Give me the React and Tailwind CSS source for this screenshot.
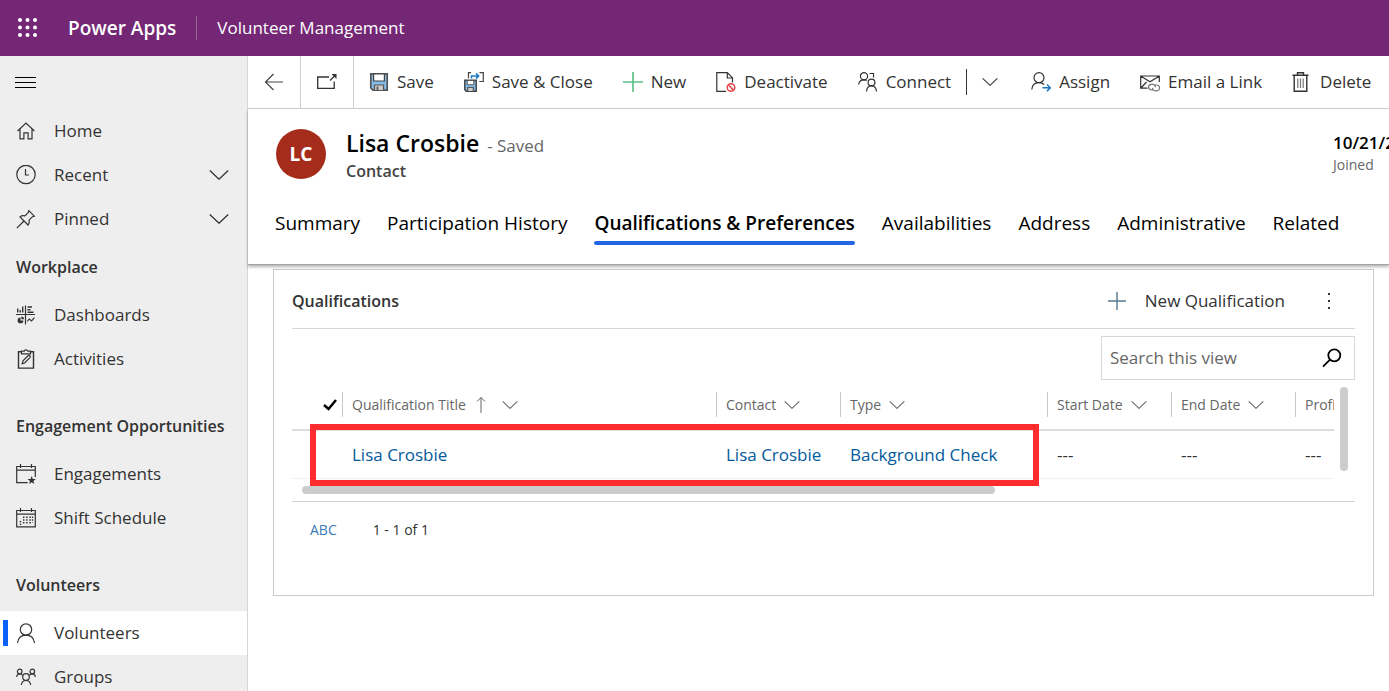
import React from "react";

function Icon({ size = "size-5", children }) {
  return (
    <svg viewBox="0 0 20 20" className={`${size} shrink-0`} fill="none" stroke="#333333" strokeWidth="1.2" aria-hidden="true">
      {children}
    </svg>
  );
}

function Chevron({ className }) {
  return (
    <svg viewBox="0 0 20 10" className={className} fill="none" stroke="currentColor" strokeWidth="1.3" aria-hidden="true">
      <path d="M0.8 0.5 10 9.2 19.2 0.5" />
    </svg>
  );
}

const icons = {
  home: (
    <Icon>
      <path d="M1.6 10 10 2.1 18.4 10M4 8v9.900h3.900v-6h4.200v6H16V8" />
    </Icon>
  ),
  recent: (
    <Icon>
      <circle cx="10" cy="9.500" r="9.200" />
      <path d="M9.500 4v6H13" />
    </Icon>
  ),
  pinned: (
    <Icon>
      <path d="M12.800 1.700 18.300 7.200l-1.800.5-3.400 3.400c.5 1.900.1 3.600-1 4.900L4 7.900c1.300-1.200 3.100-1.500 5-1L12.300 3.500ZM8 12 .8 19.200" />
    </Icon>
  ),
  dashboards: (
    <Icon>
      <path d="M9.500.5v19M0 9.500h19" />
      <path d="M1.700 3.500v4M4.200 5v2.500M6.700 1.500v6M11.500 2h4.500M11.500 4.700h3M11.500 7.300h6" strokeWidth="1.400" />
      <path d="M4.500 12.500a2.900 2.900 0 1 0 2.900 2.900H4.500Z" fill="#333333" stroke="none" />
      <path d="M5.400 11.500a2.900 2.900 0 0 1 2.700 2.800H5.400Z" fill="#333333" stroke="none" />
      <path d="m11.300 16.500 2-2.500 2.300 2 2.800-3.400" />
    </Icon>
  ),
  activities: (
    <Icon>
      <path d="M5.500 2.700h-3v16.400h15V2.700h-3" strokeWidth="1.400" />
      <path d="M5.500 4.800V2.200h2.700a1.900 1.900 0 0 1 3.600 0h2.700v2.600Z" />
      <path d="m6.200 14.800.8-3 5.300-5.300c.9-.8 2.600.8 1.800 1.800L8.900 13.700Z" />
    </Icon>
  ),
  engagements: (
    <Icon>
      <path d="M19.300 13V2.500H.7v16.100h11M.7 6.200h18.600M4.500 0v4M15.500 0v4" />
      <path d="m15.700 12 1.100 2.900 3.100.1-2.500 1.900.9 3-2.600-1.700-2.600 1.700.9-3-2.500-1.900 3.100-.1Z" fill="#333333" stroke="none" />
    </Icon>
  ),
  schedule: (
    <Icon>
      <path d="M.7 2.500h18.600v16.300H.7ZM.7 6.200h18.600M4.500 0v4M15.500 0v4" />
      <path d="M4.500 13v4M7.700 8.500V17M10.900 8.500V17M14.100 8.500V17" strokeDasharray="1.500 1.300" strokeWidth="1.500" />
      <path d="M16.500 8.500v6" strokeDasharray="1.500 1.300" strokeWidth="1.200" />
    </Icon>
  ),
  person: (
    <Icon>
      <circle cx="10" cy="6.500" r="5.700" />
      <path d="M1.500 20c.7-4.700 3.800-7.800 8.500-7.800s7.800 3.100 8.500 7.800" />
    </Icon>
  ),
  groups: (
    <Icon>
      <circle cx="10" cy="10" r="3.300" />
      <circle cx="3.700" cy="4.500" r="2.300" />
      <circle cx="16.300" cy="4.500" r="2.300" />
      <path d="M5.300 18c.4-2.800 2-4.500 4.700-4.500s4.300 1.700 4.700 4.500M.6 9.800c.3-2 1.200-3 3-3 1.400 0 2.400.6 3 1.800M19.400 9.800c-.3-2-1.200-3-3-3-1.400 0-2.400.6-3 1.800" />
    </Icon>
  ),
  save: (
    <Icon>
      <path d="M1.800 1.800h16.400v16.400H4L1.800 16Z" fill="#85bbe8" stroke="#555555" strokeWidth="1.700" />
      <path d="M4.600 2h10.800v7H4.600Z" fill="#ffffff" stroke="#444444" />
      <path d="M5.500 18v-5h9v5" fill="#d2cdc9" stroke="#555555" />
      <path d="M8.500 14.500V18" stroke="#555555" strokeWidth="1.700" />
    </Icon>
  ),
  saveClose: (
    <Icon>
      <path d="M.8 8.300h11.400v11H2.300L.8 17.800Z" fill="#85bbe8" stroke="#444444" strokeWidth="1.500" />
      <path d="M3.200 8.500h6.600v4.300H3.200Z" fill="#ffffff" stroke="#555555" strokeWidth="1" />
      <path d="M3.700 19v-3.500h5.600V19" fill="#d2cdc9" stroke="#555555" />
      <path d="M7 .7H4.500v5.500M15.500.7h3.800v8.800h-4" stroke="#444444" />
      <path d="M7.500 6.500V3.900h7M12 1.200l2.700 2.700L12 6.600" stroke="#1f78c4" strokeWidth="1.500" />
    </Icon>
  ),
  add: (
    <Icon>
      <path d="M10 0v20M0 10h20" stroke="#5fc088" strokeWidth="1.700" />
    </Icon>
  ),
  deactivate: (
    <Icon>
      <path d="M10 19.300H.8V.7h10.500l5.200 5.200v4.500M11.300.8v5.200h5.200" />
      <circle cx="15" cy="15.500" r="3.800" stroke="#e8484c" strokeWidth="1.500" />
      <path d="m12.400 13 5.200 5.100" stroke="#e8484c" strokeWidth="1.500" />
    </Icon>
  ),
  connect: (
    <Icon>
      <circle cx="6" cy="4.300" r="3.600" />
      <path d="M.7 12.500C1 9.500 3 7.900 6 7.900c1 0 1.900.2 2.700.7M11.500 1.500h4v4" />
      <circle cx="13.500" cy="10.500" r="3.400" />
      <path d="M8.500 19.500c.3-3.400 2-5.600 5-5.600s4.700 2.200 5 5.600" />
    </Icon>
  ),
  assign: (
    <Icon>
      <circle cx="8" cy="5.700" r="5" />
      <path d="M.8 17.500c.4-4.500 3-6.800 7.200-6.800 2.200 0 4 .7 5.200 2" />
      <path d="M11.500 15.800h7.500M16 12.500l3.300 3.300L16 19.100" stroke="#1f78c4" strokeWidth="1.500" />
    </Icon>
  ),
  email: (
    <Icon>
      <path d="M7.500 16.200H.7V4h18.600v6M1 4.200l9 5.500 9-5.500M1 16l5.500-6" />
      <path d="M13.500 17.800h-2.200a2.700 2.700 0 0 1 0-5.400h1.500a2.700 2.700 0 0 1 2.600 2.800M14.500 13h2.200a2.900 2.900 0 0 1 0 5.800h-1.500a2.700 2.700 0 0 1-2.700-2.900" stroke="#777777" />
    </Icon>
  ),
  trash: (
    <Icon>
      <path d="M.5 3.200h16M5.500 3V.8h6V3" strokeWidth="1.400" />
      <path d="M2.200 3.500v15.800h12.600V3.500" strokeWidth="1.400" />
      <path d="M5.800 6.500v9.500M8.500 6.500v9.500M11.200 6.500v9.500" stroke="#777777" />
    </Icon>
  ),
};

function NavHeading({ children }) {
  return <h2 className="flex h-[52px] items-center pl-4 text-[16px] font-semibold whitespace-nowrap">{children}</h2>;
}

function NavItem({ icon, label, expandable, active }) {
  return (
    <a
      href="#"
      aria-current={active ? "page" : undefined}
      className={active ? "relative flex h-11 items-center bg-white pr-[18px] pl-4" : "flex h-11 items-center pr-[18px] pl-4"}
    >
      {active && <span className="absolute left-[3px] h-[26px] w-[5px] bg-[#0b62fb]" />}
      {icons[icon]}
      <span className="ml-[18px] flex-1">{label}</span>
      {expandable && <Chevron className="h-2.5 w-5" />}
    </a>
  );
}

function Sidebar() {
  return (
    <nav className="w-[248px] shrink-0 border-r border-[#d6d6d6] bg-[#eeeeee] text-[17px] text-[#333333]">
      <button aria-label="Toggle navigation" className="flex h-[53px] items-center pl-[15px]">
        <svg viewBox="0 0 21 12" className="h-3 w-[21px]" stroke="#000000" strokeWidth="1" aria-hidden="true">
          <path d="M0 .5h21M0 5.500h21M0 10.500h21" />
        </svg>
      </button>
      <NavItem icon="home" label="Home" />
      <NavItem icon="recent" label="Recent" expandable />
      <NavItem icon="pinned" label="Pinned" expandable />
      <NavHeading>Workplace</NavHeading>
      <NavItem icon="dashboards" label="Dashboards" />
      <NavItem icon="activities" label="Activities" />
      <div className="pt-[19px]">
        <NavHeading>Engagement Opportunities</NavHeading>
        <NavItem icon="engagements" label="Engagements" />
        <NavItem icon="schedule" label="Shift Schedule" />
      </div>
      <div className="pt-[19px]">
        <NavHeading>Volunteers</NavHeading>
        <NavItem icon="person" label="Volunteers" active />
        <NavItem icon="groups" label="Groups" />
      </div>
    </nav>
  );
}

function Command({ icon, label }) {
  return (
    <button className="flex shrink-0 items-center gap-2">
      {icons[icon]}
      <span>{label}</span>
    </button>
  );
}

function CommandBar() {
  return (
    <div className="flex h-[53px] items-stretch overflow-hidden border-b border-[#d2d0ce] text-[17px] whitespace-nowrap text-[#333333]">
      <button aria-label="Back" className="flex w-[53px] shrink-0 items-center justify-center border-r border-[#d2d0ce]">
        <svg viewBox="0 0 20 20" className="size-5" fill="none" stroke="#444444" strokeWidth="1.2" aria-hidden="true">
          <path d="M9.500 2 1.500 10l8 8M1.500 10H19" />
        </svg>
      </button>
      <button aria-label="Open in new window" className="flex w-[53px] shrink-0 items-center justify-center border-r border-[#d2d0ce]">
        <svg viewBox="0 0 20 20" className="size-5" fill="none" stroke="#333333" strokeWidth="1.3" aria-hidden="true">
          <path d="M12 5H.7v11.300h16.500V9.500M13 8.500l6-6" />
          <path d="M14.500 2h5v5Z" fill="#333333" stroke="none" />
        </svg>
      </button>
      <div className="flex items-center gap-[30px] pl-[15px]">
        <Command icon="save" label="Save" />
        <Command icon="saveClose" label="Save & Close" />
        <Command icon="add" label="New" />
        <Command icon="deactivate" label="Deactivate" />
        <div className="flex items-center">
          <Command icon="connect" label="Connect" />
          <button aria-label="More connect options" className="ml-[15px] flex h-[26px] items-center border-l border-[#333333] pr-[3px] pl-[15px]">
            <Chevron className="h-2 w-4" />
          </button>
        </div>
        <Command icon="assign" label="Assign" />
        <Command icon="email" label="Email a Link" />
        <Command icon="trash" label="Delete" />
      </div>
    </div>
  );
}

const tabs = ["Summary", "Participation History", "Qualifications & Preferences", "Availabilities", "Address", "Administrative", "Related"];

function RecordHeader() {
  return (
    <header className="relative overflow-hidden border-b border-[#a3a3a3] pb-[19px] shadow-[0_2px_3px_#0000004d]">
      <div className="flex items-start pt-[18px] pl-7">
        <div className="mt-0.5 flex size-[50px] items-center justify-center rounded-full bg-[#a52c1a] text-[19px] font-bold text-white">LC</div>
        <div className="ml-5">
          <div className="flex items-baseline gap-2">
            <h1 className="text-[23px] leading-8 font-semibold text-black">Lisa Crosbie</h1>
            <span className="text-[17px] text-[#666666]">- Saved</span>
          </div>
          <div className="text-[16px] leading-6 font-semibold text-[#444444]">Contact</div>
        </div>
        <dl className="mt-1 ml-auto flex w-14 flex-col-reverse whitespace-nowrap">
          <dt className="text-[14px] leading-5 text-[#666666]">Joined</dt>
          <dd className="text-[17px] leading-6 font-semibold text-black">10/21/2021</dd>
        </dl>
      </div>
      <div role="tablist" className="mt-[26px] flex gap-[27px] pl-[27px] text-[19px] leading-7 whitespace-nowrap text-black">
        {tabs.map((tab, i) => (
          <button
            key={tab}
            role="tab"
            aria-selected={i === 2}
            className={i === 2 ? "relative pb-2 font-semibold after:absolute after:inset-x-0 after:bottom-0 after:h-1 after:rounded-full after:bg-[#2266e3]" : "pb-2"}
          >
            {tab}
          </button>
        ))}
      </div>
    </header>
  );
}

function HeadCell({ label, width, sorted }) {
  return (
    <th className={`${width} p-0 text-left font-normal`}>
      <button className="flex h-[25px] w-full items-center border-l border-[#c8c8c8] pl-[9px] whitespace-nowrap">
        {label}
        {sorted && (
          <svg viewBox="0 0 10 18" className="ml-2.5 h-[18px] w-2.5" fill="none" stroke="currentColor" aria-hidden="true">
            <path d="M5 1.500V17M1 5.500l4-4 4 4" />
          </svg>
        )}
        <Chevron className={sorted ? "ml-4 h-2 w-4 shrink-0" : "ml-2 h-2 w-4 shrink-0"} />
      </button>
    </th>
  );
}

function QualificationsTable() {
  return (
    <div className="relative">
      <div className="flex pr-[7px]">
        <div className="min-w-0 flex-1 overflow-hidden">
          <table className="w-[1190px] table-fixed border-collapse text-left text-[17px]">
            <thead className="text-[14px] text-[#666666]">
              <tr className="h-[50px] border-b-2 border-[#dddddd]">
                <th className="w-[50px] p-0">
                  <button aria-label="Select all rows" className="flex w-full justify-end pr-[5px]">
                    <svg viewBox="0 0 14 12" className="h-3 w-3.5" fill="none" stroke="#000000" strokeWidth="2.500" aria-hidden="true">
                      <path d="m1 6 4.500 4L13 1" />
                    </svg>
                  </button>
                </th>
                <HeadCell label="Qualification Title" width="w-[374px]" sorted />
                <HeadCell label="Contact" width="w-[124px]" />
                <HeadCell label="Type" width="w-[207px]" />
                <HeadCell label="Start Date" width="w-[124px]" />
                <HeadCell label="End Date" width="w-[124px]" />
                <HeadCell label="Proficiency Level" width="w-[187px]" />
              </tr>
            </thead>
            <tbody className="text-[#333333]">
              <tr className="h-12 border-b border-[#f1f1f1]">
                <td className="p-0" />
                <td className="p-0 pl-2.5 text-[#035a9b]"><a href="#">Lisa Crosbie</a></td>
                <td className="p-0 pl-2.5 text-[#035a9b]"><a href="#">Lisa Crosbie</a></td>
                <td className="p-0 pl-2.5 text-[#035a9b]"><a href="#">Background Check</a></td>
                <td className="p-0 pl-2.5">---</td>
                <td className="p-0 pl-2.5">---</td>
                <td className="p-0 pl-2.5">---</td>
              </tr>
            </tbody>
          </table>
        </div>
        <div className="mt-[7px] ml-1.5 h-[84px] w-2 rounded-full bg-[#cccccc]" />
      </div>
      <div className="mt-[7px] mb-[7px] ml-2.5 h-2 w-[693px] rounded-full bg-[#cccccc]" />
      <div className="absolute top-11 left-[18px] h-[62px] w-[729px] border-6 border-[#fd2c2e]" />
    </div>
  );
}

function QualificationsCard() {
  return (
    <section className="mt-1 mr-[15px] ml-[25px] min-h-[327px] border border-[#cccccc] pt-1 pr-[18px] pl-[18px]">
      <div className="flex h-[55px] items-center border-b border-[#d8d8d8] text-[17px] text-[#333333]">
        <h2 className="text-[16px] font-semibold">Qualifications</h2>
        <button className="ml-auto flex items-center gap-[18px]">
          <svg viewBox="0 0 20 20" className="size-5" stroke="#58788c" strokeWidth="1.400" aria-hidden="true">
            <path d="M10 1v18M1 10h18" />
          </svg>
          New Qualification
        </button>
        <button aria-label="More commands" className="mr-6 ml-[42px]">
          <svg viewBox="0 0 4 18" className="h-[18px] w-1" fill="#333333" aria-hidden="true">
            <path d="M1 1h2v2H1ZM1 8h2v2H1ZM1 15h2v2H1Z" />
          </svg>
        </button>
      </div>
      <label className="mt-[7px] ml-auto flex h-11 w-[254px] items-center border border-[#d8d8d8] pr-3 pl-2">
        <input type="search" aria-label="Search this view" placeholder="Search this view" className="min-w-0 flex-1 text-[17px] outline-none placeholder:text-[#666666]" />
        <svg viewBox="0 0 20 20" className="size-5" fill="none" stroke="#000000" strokeWidth="1.800" aria-hidden="true">
          <circle cx="12.300" cy="7.300" r="6" />
          <path d="M8 11.600 1 18.700" />
        </svg>
      </label>
      <QualificationsTable />
      <div className="flex h-14 items-center gap-9 border-t border-[#d2d2d2] pl-[18px] text-[14px] text-[#333333]">
        <button className="text-[#3b79b7]">ABC</button>
        <span>1 - 1 of 1</span>
      </div>
    </section>
  );
}

export default function App() {
  return (
    <div className="flex h-screen flex-col overflow-hidden bg-white font-['Open_Sans','Noto_Sans',sans-serif]">
      <header className="flex h-14 shrink-0 items-center bg-[#742774] pl-[17px] text-[17px] text-white">
        <button aria-label="App launcher">
          <svg viewBox="0 0 21 21" className="size-[21px]" fill="currentColor" aria-hidden="true">
            {[2, 9.5, 17].map((y) => [3, 10.5, 18].map((x) => <circle key={`${x}-${y}`} cx={x} cy={y} r="2" />))}
          </svg>
        </button>
        <span className="ml-[30px] text-[19px] font-semibold">Power Apps</span>
        <span className="mx-5 h-6 w-px bg-[#9a629a]" />
        <span>Volunteer Management</span>
      </header>
      <div className="flex min-h-0 flex-1">
        <Sidebar />
        <main className="min-w-0 flex-1">
          <CommandBar />
          <RecordHeader />
          <QualificationsCard />
        </main>
      </div>
    </div>
  );
}
